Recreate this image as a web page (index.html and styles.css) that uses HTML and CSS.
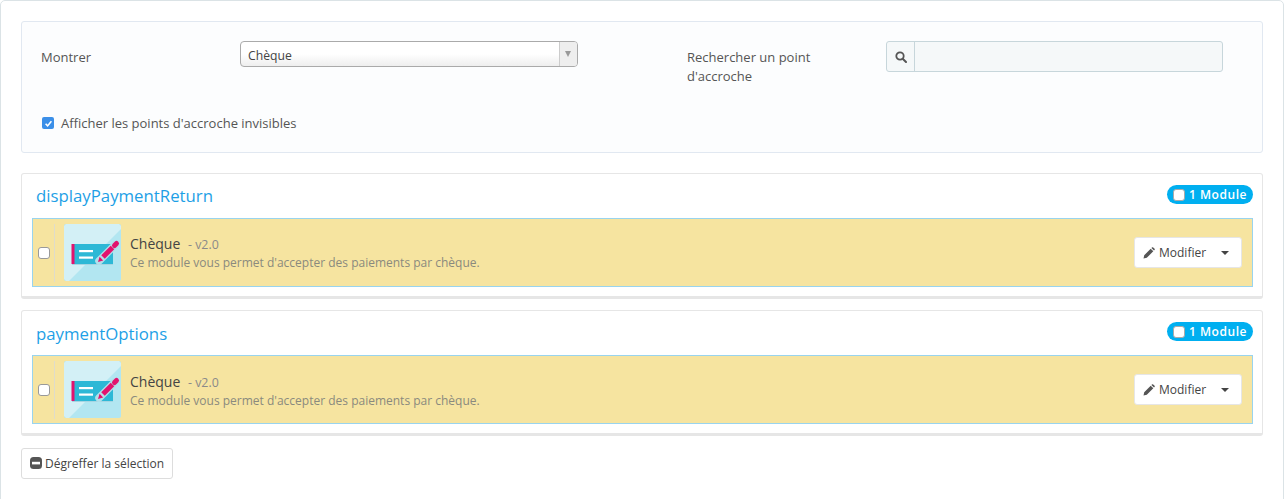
FILE: index.html
```html
<!DOCTYPE html>
<html lang="fr">
<head>
<meta charset="utf-8">
<title>Positions</title>
<link rel="stylesheet" href="styles.css">
</head>
<body>
<main class="panel">
  <form class="well">
    <div class="filters">
      <label class="lbl lbl-show">Montrer</label>
      <div class="select">
        <span class="select-text">Chèque</span>
        <span class="select-arrow"><i></i></span>
      </div>
      <label class="lbl lbl-search">Rechercher un point d'accroche</label>
      <div class="search">
        <span class="search-addon">
          <svg width="12" height="12" viewBox="0 0 12 12"><circle cx="5" cy="5" r="3.7" fill="none" stroke="#555" stroke-width="1.8"/><path d="M7.7 7.7 11 11" stroke="#555" stroke-width="2" stroke-linecap="round"/></svg>
        </span>
        <span class="search-input"></span>
      </div>
    </div>
    <div class="show-invisible">
      <span class="check-on"><svg width="11" height="11" viewBox="0 0 11 11"><path d="M2.6 5.8 4.6 7.9 8.4 3.2" fill="none" stroke="#fff" stroke-width="1.6"/></svg></span>
      <span>Afficher les points d'accroche invisibles</span>
    </div>
  </form>

  <section class="hook">
    <header class="hook-head">
      <h2 class="hook-title">displayPaymentReturn</h2>
      <span class="badge"><span class="badge-check"></span>1 Module</span>
    </header>
    <div class="module">
      <span class="check-off"></span>
      <span class="drag"></span>
      <svg class="logo" width="57" height="57" viewBox="0 0 57 57">
        <rect width="57" height="57" rx="2" fill="#b2e6f1"/>
        <path d="M2 0H55L57 2V5L5 57H2L0 55V2Z" fill="#d3f0f6"/>
        <rect x="8" y="21" width="41" height="20" fill="#a6d5e2"/>
        <rect x="8" y="20" width="41" height="20" fill="#2db8d6"/>
        <rect x="7.5" y="20" width="3" height="20" fill="#e2136e"/>
        <rect x="15" y="26" width="14" height="2.2" fill="#fff"/>
        <rect x="15" y="32.5" width="14" height="2.2" fill="#fff"/>
        <path d="M35 37 51 21" stroke="#b2dfe9" stroke-width="7.5" stroke-linecap="round"/>
        <path d="M39 33 48.5 23.5" stroke="#e2136e" stroke-width="5"/>
        <path d="M50.5 21.5 52.5 19.5" stroke="#e2136e" stroke-width="5" stroke-linecap="round"/>
        <path d="M34 38 35.6 32.8 39.2 36.4Z" fill="#e2136e"/>
      </svg>
      <div class="module-text">
        <div class="module-name">Chèque <small>- v2.0</small></div>
        <div class="module-desc">Ce module vous permet d'accepter des paiements par chèque.</div>
      </div>
      <div class="action">
        <svg width="12" height="12" viewBox="0 0 12 12"><path d="M0.5 11.5 1.2 8.2 7.7 1.7 10.3 4.3 3.8 10.8ZM8.4 1 9.2 0.3Q9.7 0 10.2 0.4L11.6 1.8Q12 2.3 11.7 2.8L11 3.6Z" fill="#555"/></svg>
        <span class="action-text">Modifier</span>
        <i class="caret"></i>
      </div>
    </div>
  </section>

  <section class="hook">
    <header class="hook-head">
      <h2 class="hook-title">paymentOptions</h2>
      <span class="badge"><span class="badge-check"></span>1 Module</span>
    </header>
    <div class="module">
      <span class="check-off"></span>
      <span class="drag"></span>
      <svg class="logo" width="57" height="57" viewBox="0 0 57 57">
        <rect width="57" height="57" rx="2" fill="#b2e6f1"/>
        <path d="M2 0H55L57 2V5L5 57H2L0 55V2Z" fill="#d3f0f6"/>
        <rect x="8" y="21" width="41" height="20" fill="#a6d5e2"/>
        <rect x="8" y="20" width="41" height="20" fill="#2db8d6"/>
        <rect x="7.5" y="20" width="3" height="20" fill="#e2136e"/>
        <rect x="15" y="26" width="14" height="2.2" fill="#fff"/>
        <rect x="15" y="32.5" width="14" height="2.2" fill="#fff"/>
        <path d="M35 37 51 21" stroke="#b2dfe9" stroke-width="7.5" stroke-linecap="round"/>
        <path d="M39 33 48.5 23.5" stroke="#e2136e" stroke-width="5"/>
        <path d="M50.5 21.5 52.5 19.5" stroke="#e2136e" stroke-width="5" stroke-linecap="round"/>
        <path d="M34 38 35.6 32.8 39.2 36.4Z" fill="#e2136e"/>
      </svg>
      <div class="module-text">
        <div class="module-name">Chèque <small>- v2.0</small></div>
        <div class="module-desc">Ce module vous permet d'accepter des paiements par chèque.</div>
      </div>
      <div class="action">
        <svg width="12" height="12" viewBox="0 0 12 12"><path d="M0.5 11.5 1.2 8.2 7.7 1.7 10.3 4.3 3.8 10.8ZM8.4 1 9.2 0.3Q9.7 0 10.2 0.4L11.6 1.8Q12 2.3 11.7 2.8L11 3.6Z" fill="#555"/></svg>
        <span class="action-text">Modifier</span>
        <i class="caret"></i>
      </div>
    </div>
  </section>

  <div class="unhook">
    <svg width="12" height="12" viewBox="0 0 12 12"><rect width="12" height="12" rx="3.5" fill="#555"/><rect x="2" y="4.8" width="8" height="2.6" fill="#fff"/></svg>
    <span>Dégreffer la sélection</span>
  </div>
</main>
</body>
</html>
```

FILE: styles.css
```css
* { box-sizing: border-box; }
html, body { margin: 0; padding: 0; background: #fff; height: 499px; overflow: hidden; }
body { font-family: "Open Sans", "Liberation Sans", sans-serif; font-size: 12px; color: #555; }

.panel {
  height: 510px;
  padding: 20px;
  background: #fff;
  border: 1px solid #dbe3e6;
  border-radius: 5px;
}

.well {
  height: 132px;
  padding: 19px 19px 0;
  background: #fcfdfe;
  border: 1px solid #e1e8f1;
  border-radius: 3px;
}
.filters { display: flex; align-items: flex-start; height: 71px; }
.lbl { font-size: 13px; line-height: 19px; color: #555; }
.lbl-show { width: 199px; padding-top: 7px; line-height: 19px; }
.lbl-search { width: 199px; margin-left: 109px; padding-top: 7px; padding-right: 40px; }

.select {
  display: flex;
  align-items: center;
  width: 338px;
  height: 26px;
  background: linear-gradient(#fff 50%, #eee);
  border: 1px solid #aaa;
  border-radius: 4px;
  color: #444;
}
.select-text { flex: 1; padding-left: 7px; font-size: 12.2px; line-height: 24px; margin-top: 3px; }
.select-arrow { display: flex; align-items: center; justify-content: center; width: 18px; height: 100%; padding-right: 1px; background: #eee; border-left: 1px solid #ccc; border-radius: 0 3px 3px 0; }
.select-arrow i { border-style: solid; border-width: 6px 3px 0; border-color: #999 transparent transparent; }

.search { display: flex; width: 337px; height: 31px; background: #f5f8f9; border: 1px solid #c7d6db; border-radius: 3px; }
.search-addon { display: flex; align-items: center; justify-content: center; width: 28px; border-right: 1px solid #c7d6db; }
.search-input { flex: 1; }

.show-invisible { display: flex; align-items: center; gap: 7px; padding-top: 2px; font-size: 13px; line-height: 18px; color: #555; }
.check-on { display: flex; align-items: center; justify-content: center; width: 12px; height: 12px; margin-left: 1px; background: #3b8fe8; border-radius: 2px; }

.hook {
  height: 126px;
  margin-top: 20px;
  padding: 0 9px 0 10px;
  background: #fff;
  border: 1px solid #e6e6e6;
  border-bottom-width: 3px;
  border-radius: 3px;
}
.hook + .hook { margin-top: 11.4px; }
.hook-head { display: flex; align-items: flex-start; justify-content: space-between; height: 44px; padding-left: 4px; }
.hook-title { margin: 10.2px 0 0; font-size: 16.8px; font-weight: 400; line-height: 23px; color: #1e9fe6; }
.badge { display: flex; align-items: center; gap: 4px; height: 19px; margin-top: 11px; padding: 0 6px; background: #00aff0; border-radius: 10px; color: #fff; font-size: 12px; font-weight: 600; letter-spacing: .55px; }
.badge-check { width: 12px; height: 12px; background: #fff; border: 1px solid #aaa; border-radius: 3px; }

.module { display: flex; align-items: center; height: 69px; background: #f6e4a0; border: 1px solid #99d4ee; }
.check-off { width: 12px; height: 12px; margin-left: 5px; background: #fff; border: 1px solid #999; border-radius: 3px; }
.drag { width: 1px; height: 58px; margin-left: 4px; background: #dfdccb; }
.logo { display: block; margin-left: 9px; flex: none; }
.module-text { flex: 1; margin-left: 9px; padding-top: 3.4px; }
.module-name { font-size: 14px; line-height: 19px; color: #444; margin-top: -3px; }
.module-name small { margin-left: 4px; font-size: 12.4px; color: #8a8a8a; }
.module-desc { font-size: 12px; line-height: 16px; margin-top: 1px; color: #8a8a7e; }
.action { display: flex; align-items: center; width: 108px; height: 31px; margin-right: 10px; padding-left: 8px; background: #fff; border: 1px solid #e6e6e6; border-radius: 3px; }
.action-text { margin-left: 4px; font-size: 12px; color: #444; }
.caret { margin-left: 15px; border-style: solid; border-width: 4px 4px 0; border-color: #444 transparent transparent; }

.unhook { display: inline-flex; align-items: center; gap: 3px; height: 31px; width: 152px; margin-top: 11.6px; padding-left: 8px; background: #fff; border: 1px solid #ddd; border-radius: 3px; font-size: 12px; color: #444; }
```
